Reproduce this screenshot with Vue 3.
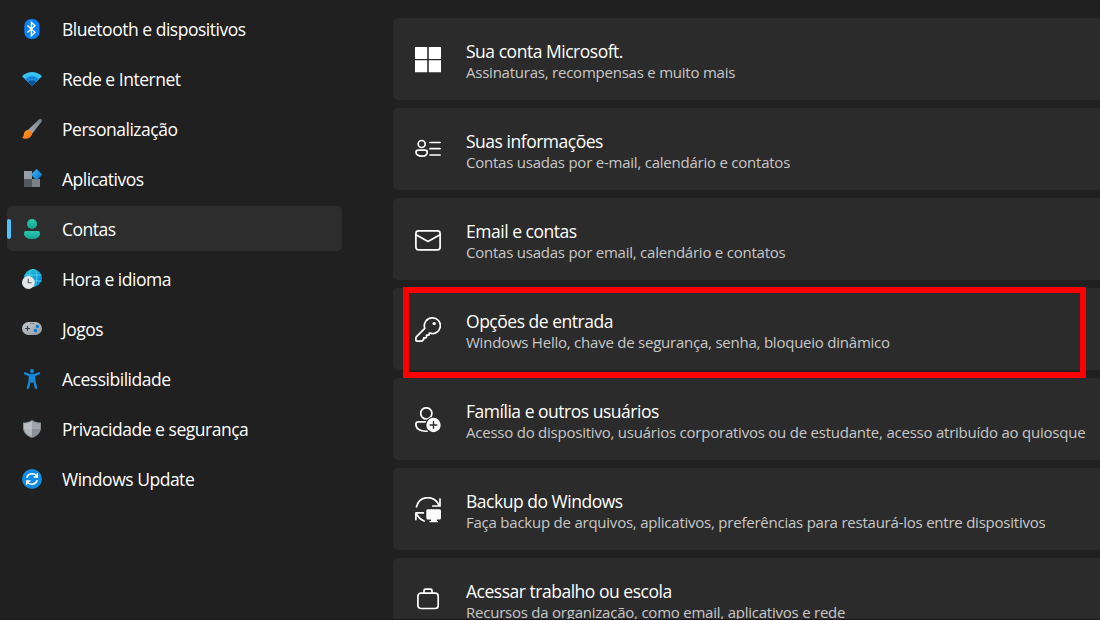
<template>
  <div class="settings">
    <nav class="sidebar">
      <a
        v-for="item in navItems"
        :key="item.id"
        class="nav-item"
        :class="{ active: item.id === current }"
        @click="current = item.id"
      >
        <svg v-if="item.id === 'bluetooth'" class="nav-icon" viewBox="0 0 20 20">
          <rect x="2.3" y="0" width="15.2" height="20" rx="7" fill="#0a84f8" />
          <path d="M5.4 6.4 13 13.2 9.4 16.6V3.4L13 6.8 5.4 13.6" fill="none" stroke="#fff" stroke-width="1.4" />
        </svg>

        <svg v-else-if="item.id === 'network'" class="nav-icon" viewBox="0 0 20 20">
          <path d="M0 7.2Q10-1.2 20 7.2L10 17Z" fill="#36c5f1" />
          <path d="M3 10.1Q10 3.9 17 10.1L10 17Z" fill="#1988d9" />
          <path d="M5.8 13Q10 9.3 14.2 13L10 17Z" fill="#105298" />
        </svg>

        <svg v-else-if="item.id === 'personalization'" class="nav-icon" viewBox="0 0 20 20">
          <defs>
            <linearGradient id="handle" x1="0" y1="1" x2="1" y2="0">
              <stop offset="0" stop-color="#a7adb3" />
              <stop offset="1" stop-color="#777f87" />
            </linearGradient>
            <linearGradient id="brush" x1="0" y1="0" x2="1" y2="1">
              <stop offset="0" stop-color="#ffa52f" />
              <stop offset="1" stop-color="#ee6910" />
            </linearGradient>
          </defs>
          <path d="M6.2 10.7 16.5.8Q18-.4 19.4.3 20.3 1.5 19.4 3L10.3 14.4Z" fill="url(#handle)" />
          <path d="M0 18.4C3 17.5.7 14.7 3.2 12.3 5.4 10.2 7.7 10.7 9.3 12.4 11.2 14.6 9.7 17.3 7.6 18.7 5 20.2 1.8 20.1 0 18.4Z" fill="url(#brush)" />
        </svg>

        <svg v-else-if="item.id === 'apps'" class="nav-icon" viewBox="0 0 20 20">
          <defs>
            <linearGradient id="diamond" x1="0" y1="0" x2="1" y2="1">
              <stop offset="0" stop-color="#3db8fb" />
              <stop offset="1" stop-color="#0872c9" />
            </linearGradient>
          </defs>
          <path d="M2 2H10V10H2Z" fill="#999fa7" />
          <path d="M2 10H10V18H2Z" fill="#535960" />
          <path d="M10 10H18V18H10Z" fill="#7b8088" />
          <path d="M14.6.2 20 5.6 14.6 11 9.2 5.6Z" fill="url(#diamond)" stroke="url(#diamond)" stroke-width=".6" stroke-linejoin="round" />
        </svg>

        <svg v-else-if="item.id === 'accounts'" class="nav-icon" viewBox="0 0 20 20">
          <defs>
            <linearGradient id="teal" x1="0" y1="0" x2="0" y2="1">
              <stop offset="0" stop-color="#2cc8b0" />
              <stop offset="1" stop-color="#12a591" />
            </linearGradient>
          </defs>
          <circle cx="10" cy="5" r="5" fill="url(#teal)" />
          <path d="M4 12H16Q18 12 18 14C18 18.2 14.8 20 10 20S2 18.2 2 14Q2 12 4 12Z" fill="url(#teal)" />
        </svg>

        <svg v-else-if="item.id === 'time'" class="nav-icon" viewBox="0 0 20 20">
          <defs>
            <linearGradient id="globe" x1="0" y1="0" x2="1" y2="1">
              <stop offset="0" stop-color="#2bbfd7" />
              <stop offset="1" stop-color="#087dca" />
            </linearGradient>
          </defs>
          <circle cx="11" cy="9" r="9" fill="url(#globe)" />
          <g fill="none" stroke="#43d8ef" stroke-width=".9">
            <path d="M3 6H19.2M3 12H19.5" />
            <ellipse cx="11" cy="9" rx="4" ry="8.8" />
          </g>
          <circle cx="6.4" cy="13.5" r="6.4" fill="#e4e5e6" />
          <path d="M6.2 9.7V13.7H9.6" fill="none" stroke="#55585b" stroke-width="1.1" />
        </svg>

        <svg v-else-if="item.id === 'gaming'" class="nav-icon" viewBox="0 0 20 20">
          <defs>
            <linearGradient id="pad" x1="0" y1="0" x2="1" y2="1">
              <stop offset="0" stop-color="#c5cbd0" />
              <stop offset="1" stop-color="#9299a1" />
            </linearGradient>
          </defs>
          <rect x="0" y="3" width="20" height="13" rx="6.5" fill="url(#pad)" />
          <path d="M3.1 9.5H8M5.5 7V12" stroke="#3c4045" stroke-width="1.1" />
          <path d="M8 4.5H8.8M9.7 4.5H10.5M11.4 4.5H12.2" stroke="#50555a" />
          <circle cx="15.4" cy="7.4" r="1.7" fill="#087bd2" />
          <circle cx="13.4" cy="11.5" r="1.7" fill="#087bd2" />
        </svg>

        <svg v-else-if="item.id === 'accessibility'" class="nav-icon" viewBox="0 0 20 20">
          <circle cx="10" cy="2.1" r="2.1" fill="#1688d8" />
          <path
            d="M3 4.4 7.6 6.2H12.4L17 4.4M7.8 6.2V12L6 18.8M12.2 6.2V12L14 18.8M10 6V12.4"
            fill="none"
            stroke="#1688d8"
            stroke-width="2.4"
            stroke-linecap="round"
            stroke-linejoin="round"
          />
        </svg>

        <svg v-else-if="item.id === 'privacy'" class="nav-icon" viewBox="0 0 20 20">
          <path d="M10 1C13 3 15.8 3.5 19 3.5V8.7C19 13.5 15.4 17 10 19 4.6 17 1 13.5 1 8.7V3.5C4.2 3.5 7 3 10 1Z" fill="#8b929a" />
          <path d="M10 2.3V10H2V4.6C5.2 4.4 7.5 3.8 10 2.3Z" fill="#b9bec3" />
          <path d="M10 2.3V10H18V4.6C14.8 4.4 12.5 3.8 10 2.3Z" fill="#a0a6ac" />
          <path d="M2.1 10H10V17.8C5.8 16.2 2.8 13.8 2.1 10Z" fill="#b0b6bb" />
          <path d="M17.9 10H10V17.8C14.2 16.2 17.2 13.8 17.9 10Z" fill="#8a9198" />
        </svg>

        <svg v-else class="nav-icon" viewBox="0 0 20 20">
          <circle cx="10" cy="10" r="10" fill="#108be0" />
          <g fill="none" stroke="#fff" stroke-width="1.5">
            <path d="M4.7 8.7C6.1 4.1 12.4 3.3 15 7.4M15.3 4.3V8H11.6" />
            <path d="M15.3 11.3C13.9 15.9 7.6 16.7 5 12.6M4.7 15.7V12H8.4" />
          </g>
        </svg>
        <span class="nav-label">{{ item.label }}</span>
      </a>
    </nav>

    <main class="content">
      <section
        v-for="card in cards"
        :key="card.id"
        class="card"
        :class="{ highlighted: card.id === 'signin' }"
      >
        <svg class="card-icon" viewBox="0 0 26 26">
          <path v-if="card.id === 'microsoft'" d="M0 0H12.2V12H0ZM13.8 0H26V12H13.8ZM0 13.3H12.2V25.2H0ZM13.8 13.3H26V25.2H13.8Z" fill="#fff" />

          <g v-else-if="card.id === 'info'" class="line">
            <circle cx="6.7" cy="7" r="3.5" />
            <path d="M3.4 13.2H10Q12.2 13.2 12.2 15.2C12.2 17.5 10 19.2 6.7 19.2S1 17.5 1 15.2Q1 13.2 3.4 13.2Z" />
            <path d="M15 5.5H25.2M15 11.7H25.2M15 18H25.2" />
          </g>

          <g v-else-if="card.id === 'email'" class="line">
            <rect x=".9" y="3.8" width="24.2" height="19.1" rx="2.6" />
            <path d="M1 7.7 13 14.4 25 7.7" />
          </g>

          <g v-else-if="card.id === 'signin'" class="line">
            <path d="M17.3.9A7.8 7.8 0 1 1 14.8 16L14.2 16.3V17.5Q14.2 18.2 13.5 18.2H11.5V20Q11.5 20.8 10.7 20.8H8.7V22.4L6.9 24.2H2Q.9 24.2.9 23.2V21Q.9 20.2 1.5 19.6L9.8 11.4A7.8 7.8 0 0 1 17.3.9Z" />
            <circle cx="19.2" cy="6.6" r="1.7" fill="#fff" stroke="none" />
          </g>

          <g v-else-if="card.id === 'family'" class="line">
            <circle cx="11.3" cy="6.4" r="5.6" />
            <path d="M11 14.9H3.4Q.9 14.9.9 17.2C.9 21.8 5 24.6 12 24.2" />
            <circle cx="18.5" cy="18" r="8.2" fill="#2b2b2b" stroke="none" />
            <circle cx="18.5" cy="18" r="7.2" fill="#fff" stroke="none" />
            <path d="M18.5 14.7V21.3M15.2 18H21.8" stroke="#2b2b2b" stroke-width="1.4" />
          </g>

          <g v-else-if="card.id === 'backup'" class="line">
            <path d="M1.5 9.8C4.5-2 19.8-2.4 24.2 8.9M25 2V9H17.8" />
            <path d="M.9 22.6V15.9H8.3M1.2 16.2C3 20.2 6.1 23 9.2 24" />
            <path d="M12.8 12.3H24.5Q26 12.3 26 13.8V21Q26 22.5 24.5 22.5H22V24H23V25.2H14.5V24H16V22.5H12.8Q11.3 22.5 11.3 21V13.8Q11.3 12.3 12.8 12.3Z" fill="#fff" stroke="none" />
          </g>

          <g v-else class="line">
            <rect x="2.9" y="6.2" width="20.3" height="15.3" rx="3" />
            <path d="M9 6V3.7Q9 2.2 10.5 2.2H15.5Q17 2.2 17 3.7V6" />
          </g>
        </svg>
        <div class="card-text">
          <h2>{{ card.title }}</h2>
          <p>{{ card.text }}</p>
        </div>
      </section>
    </main>
  </div>
</template>

<script setup>
import { ref } from 'vue';

const current = ref('accounts');

const navItems = [
  { id: 'bluetooth', label: 'Bluetooth e dispositivos' },
  { id: 'network', label: 'Rede e Internet' },
  { id: 'personalization', label: 'Personalização' },
  { id: 'apps', label: 'Aplicativos' },
  { id: 'accounts', label: 'Contas' },
  { id: 'time', label: 'Hora e idioma' },
  { id: 'gaming', label: 'Jogos' },
  { id: 'accessibility', label: 'Acessibilidade' },
  { id: 'privacy', label: 'Privacidade e segurança' },
  { id: 'update', label: 'Windows Update' },
];

const cards = [
  { id: 'microsoft', title: 'Sua conta Microsoft.', text: 'Assinaturas, recompensas e muito mais' },
  { id: 'info', title: 'Suas informações', text: 'Contas usadas por e-mail, calendário e contatos' },
  { id: 'email', title: 'Email e contas', text: 'Contas usadas por email, calendário e contatos' },
  { id: 'signin', title: 'Opções de entrada', text: 'Windows Hello, chave de segurança, senha, bloqueio dinâmico' },
  { id: 'family', title: 'Família e outros usuários', text: 'Acesso do dispositivo, usuários corporativos ou de estudante, acesso atribuído ao quiosque' },
  { id: 'backup', title: 'Backup do Windows', text: 'Faça backup de arquivos, aplicativos, preferências para restaurá-los entre dispositivos' },
  { id: 'work', title: 'Acessar trabalho ou escola', text: 'Recursos da organização, como email, aplicativos e rede' },
];
</script>

<style>
body {
  margin: 0;
  background: #202020;
}
</style>

<style scoped>
.settings {
  position: relative;
  display: flex;
  box-sizing: border-box;
  width: 1100px;
  height: 620px;
  overflow: hidden;
  background: #202020;
  color: #fff;
  font-family: "Open Sans", "Noto Sans", sans-serif;
}

/* Dark edge along the bottom of the window */
.settings::after {
  content: "";
  position: absolute;
  z-index: 2;
  right: 0;
  bottom: 0;
  left: 0;
  height: 1px;
  background: #1c151b;
}

.sidebar {
  display: flex;
  flex-direction: column;
  flex: none;
  gap: 5px;
  width: 335px;
  padding: 6px 51px 0 7px;
}

.nav-item {
  position: relative;
  display: flex;
  align-items: center;
  gap: 20px;
  box-sizing: border-box;
  height: 45px;
  padding-left: 15px;
  border-radius: 5px;
  cursor: default;
}

.nav-item.active {
  background: #2d2d2d;
}

.nav-item.active::before {
  content: "";
  position: absolute;
  left: 0;
  top: 13px;
  width: 4px;
  height: 20px;
  border-radius: 2px;
  background: #4cc2ff;
}

.nav-icon {
  flex: none;
  width: 20px;
  height: 20px;
}

.nav-label {
  font-size: 17.5px;
  line-height: 24px;
  letter-spacing: -0.48px;
  white-space: nowrap;
}

.content {
  display: flex;
  flex-direction: column;
  flex: 1;
  gap: 8px;
  min-width: 0;
  padding-top: 18px;
}

.card {
  position: relative;
  display: flex;
  align-items: center;
  flex: none;
  gap: 25px;
  box-sizing: border-box;
  height: 82px;
  padding: 2px 0 0 22px;
  border-radius: 5px 0 0 5px;
  background: #2b2b2b;
}

/* Red marker drawn over the card */
.card.highlighted::after {
  content: "";
  position: absolute;
  z-index: 1;
  top: -1px;
  left: 10px;
  box-sizing: border-box;
  width: 683px;
  height: 91px;
  border: 6px solid #fe0000;
}

.card-icon {
  flex: none;
  width: 26px;
  height: 26px;
}

.line {
  fill: none;
  stroke: #fff;
  stroke-width: 1.7;
  stroke-linecap: round;
  stroke-linejoin: round;
}

.card-text {
  padding-top: 2px;
  white-space: nowrap;
}

.card-text h2 {
  margin: 0;
  font-size: 17.5px;
  font-weight: 400;
  line-height: 22px;
  letter-spacing: -0.48px;
}

.card-text p {
  margin: 0;
  color: #c8c8c8;
  font-size: 15px;
  line-height: 20px;
  letter-spacing: -0.23px;
}
</style>
